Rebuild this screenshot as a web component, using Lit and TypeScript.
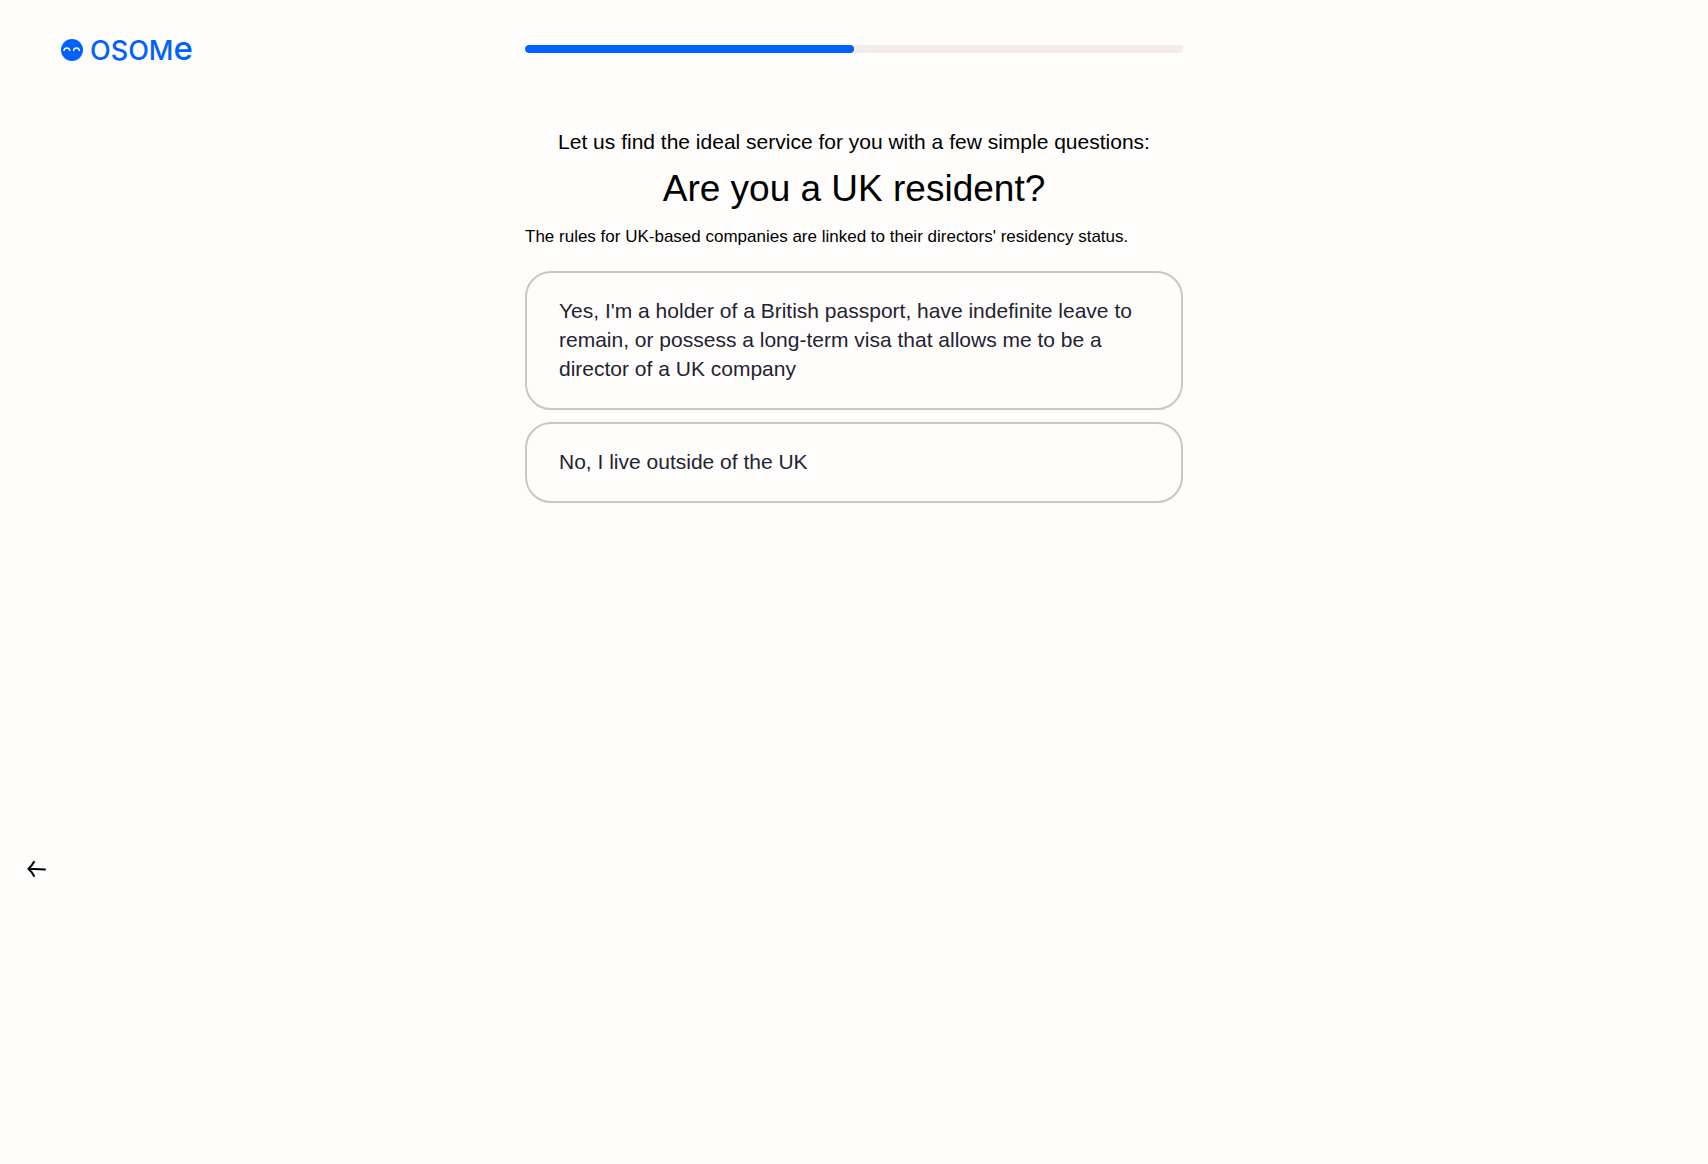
import { LitElement, html, css } from "lit";
import { customElement, property, state } from "lit/decorators.js";

@customElement("osome-logo")
class OsomeLogo extends LitElement {
  static styles = css`
    :host { display: block; }
    .logo { display: inline-flex; align-items: center; gap: 7px; color: #0061ff; text-decoration: none; }
    .mark { display: block; width: 22px; height: 22px; flex: none; }
    .word { display: flex; align-items: baseline; font-family: Inter, "Liberation Sans", sans-serif; font-size: 27px; line-height: 32px; font-weight: 500; }
    .tall { font-size: 33px; line-height: 32px; }
  `;

  render() {
    return html`
      <a class="logo" href="#" aria-label="Osome">
        <svg class="mark" viewBox="0 0 22 22" aria-hidden="true">
          <circle cx="11" cy="11" r="11" fill="#0061ff"></circle>
          <path d="M3 11.4C3.6 8.3 8.2 8.3 8.8 11.4M12.6 11.4C13.2 8.3 17.8 8.3 18.4 11.4" fill="none" stroke="#fffdfb" stroke-width="1.5" stroke-linecap="round"></path>
        </svg>
        <span class="word"><span>OSOM</span><span class="tall">e</span></span>
      </a>
    `;
  }
}

@customElement("step-progress")
class StepProgress extends LitElement {
  @property({ type: Number }) value = 0;

  static styles = css`
    :host { display: block; }
    .track { height: 8px; border-radius: 4px; background: #f4ece8; overflow: hidden; }
    .fill { height: 100%; border-radius: 4px; background: #0061ff; }
  `;

  render() {
    return html`
      <div class="track" role="progressbar" aria-label="Progress" aria-valuemin="0" aria-valuemax="100" aria-valuenow=${this.value}>
        <div class="fill" style="width:${this.value}%"></div>
      </div>
    `;
  }
}

@customElement("app-root")
class AppRoot extends LitElement {
  @state() private selected = -1;

  private answers = [
    "Yes, I'm a holder of a British passport, have indefinite leave to remain, or possess a long-term visa that allows me to be a director of a UK company",
    "No, I live outside of the UK",
  ];

  static styles = css`
    :host {
      display: block;
      min-height: 100vh;
      background: #fffdfb;
      color: #000;
      font-family: "Liberation Sans", Arial, sans-serif;
    }
    .page { display: flex; flex-direction: column; min-height: calc(75vh + 8px); }
    .header {
      display: grid;
      grid-template-columns: minmax(160px, 1fr) minmax(0, 658px) minmax(0, 1fr);
      align-items: center;
      height: 97px;
    }
    .brand { padding: 2px 0 0 61px; }
    .main { box-sizing: border-box; width: 100%; max-width: 658px; margin: 0 auto; padding-top: 30px; }
    .lead { margin: 0; font-size: 21px; line-height: 30px; text-align: center; }
    .title { margin: 8px 0 0; font-size: 37px; line-height: 48px; font-weight: 400; text-align: center; }
    .note { margin: 12px 0 0; font-size: 17px; line-height: 24px; }
    .answers { display: flex; flex-direction: column; gap: 12px; margin-top: 22px; }
    .answer {
      padding: 23px 32px 25px;
      border: 2px solid #cfc4be;
      border-radius: 26px;
      background: transparent;
      color: #1f2333;
      font: inherit;
      font-size: 21px;
      line-height: 29px;
      text-align: left;
      cursor: pointer;
    }
    .answer:hover, .answer[aria-pressed="true"] { border-color: #0061ff; }
    .nav { margin-top: auto; padding-left: 24px; }
    .back { display: block; width: 24px; height: 24px; padding: 0; border: 0; background: none; color: #000; cursor: pointer; }
    .arrow { display: block; width: 24px; height: 24px; }
  `;

  render() {
    return html`
      <div class="page">
        <header class="header">
          <osome-logo class="brand"></osome-logo>
          <step-progress .value=${50}></step-progress>
        </header>
        <main class="main">
          <p class="lead">Let us find the ideal service for you with a few simple questions:</p>
          <h1 class="title">Are you a UK resident?</h1>
          <p class="note">The rules for UK-based companies are linked to their directors' residency status.</p>
          <div class="answers">
            ${this.answers.map(
              (text, i) => html`
                <button class="answer" type="button" aria-pressed=${this.selected === i} @click=${() => (this.selected = i)}>${text}</button>
              `
            )}
          </div>
        </main>
        <nav class="nav">
          <button class="back" type="button" aria-label="Back">
            <svg class="arrow" viewBox="0 0 24 24" aria-hidden="true">
              <path d="M21 12.4L4.5 11.8M10 4.8C8.6 7.6 6.6 10 4.4 11.8C6.6 13.8 8.6 16 10 19" fill="none" stroke="currentColor" stroke-width="2" stroke-linecap="round" stroke-linejoin="round"></path>
            </svg>
          </button>
        </nav>
      </div>
    `;
  }
}
